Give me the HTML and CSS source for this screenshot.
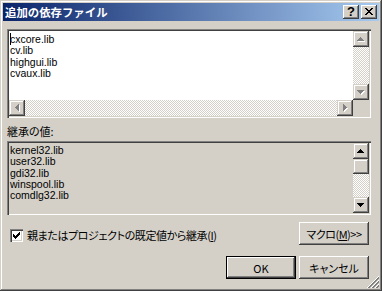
FILE: index.html
```html
<!DOCTYPE html>
<html lang="ja">
<head>
<meta charset="utf-8">
<link rel="stylesheet" href="styles.css">
</head>
<body>
<div class="window">
  <div class="titlebar">
    <span class="title">追加の依存ファイル</span>
    <div class="tbtns">
      <span class="tbtn help">?</span>
      <span class="tbtn close"><svg width="16" height="14" viewBox="0 0 16 14" shape-rendering="crispEdges"><path fill="#000" d="M4 3h2v1h-2zM10 3h2v1h-2zM5 4h2v1h-2zM9 4h2v1h-2zM6 5h4v1h-4zM7 6h2v1h-2zM6 7h4v1h-4zM5 8h2v1h-2zM9 8h2v1h-2zM4 9h2v1h-2zM10 9h2v1h-2z"/></svg></span>
    </div>
  </div>
  <div class="client">
    <div class="edit edit-white">
      <div class="edit-text">
        <div class="line"><span class="caret"></span>cxcore.lib</div>
        <div class="line">cv.lib</div>
        <div class="line">highgui.lib</div>
        <div class="line">cvaux.lib</div>
      </div>
      <div class="vscroll">
        <div class="sbtn"><svg width="16" height="16" viewBox="0 0 16 16" shape-rendering="crispEdges"><path fill="#fff" d="M8 7h1v1h-1zM7 8h3v1h-3zM6 9h5v1h-5zM5 10h7v1h-7z"/><path fill="#808080" d="M7 6h1v1h-1zM6 7h3v1h-3zM5 8h5v1h-5zM4 9h7v1h-7z"/></svg></div>
        <div class="track"></div>
        <div class="sbtn"><svg width="16" height="16" viewBox="0 0 16 16" shape-rendering="crispEdges"><path fill="#fff" d="M5 7h7v1h-7zM6 8h5v1h-5zM7 9h3v1h-3zM8 10h1v1h-1z"/><path fill="#808080" d="M4 6h7v1h-7zM5 7h5v1h-5zM6 8h3v1h-3zM7 9h1v1h-1z"/></svg></div>
      </div>
      <div class="hscroll">
        <div class="sbtn"><svg width="16" height="16" viewBox="0 0 16 16" shape-rendering="crispEdges"><path fill="#fff" d="M7 8h1v1h-1zM8 7h1v3h-1zM9 6h1v5h-1zM10 5h1v7h-1z"/><path fill="#808080" d="M6 7h1v1h-1zM7 6h1v3h-1zM8 5h1v5h-1zM9 4h1v7h-1z"/></svg></div>
        <div class="track"></div>
        <div class="sbtn"><svg width="16" height="16" viewBox="0 0 16 16" shape-rendering="crispEdges"><path fill="#fff" d="M7 5h1v7h-1zM8 6h1v5h-1zM9 7h1v3h-1zM10 8h1v1h-1z"/><path fill="#808080" d="M6 4h1v7h-1zM7 5h1v5h-1zM8 6h1v3h-1zM9 7h1v1h-1z"/></svg></div>
      </div>
      <div class="corner"></div>
    </div>

    <div class="label">継承の値:</div>

    <div class="edit edit-grey">
      <div class="edit-text">
        <div class="line">kernel32.lib</div>
        <div class="line">user32.lib</div>
        <div class="line">gdi32.lib</div>
        <div class="line">winspool.lib</div>
        <div class="line">comdlg32.lib</div>
      </div>
      <div class="vscroll vscroll-full">
        <div class="sbtn"><svg width="16" height="16" viewBox="0 0 16 16" shape-rendering="crispEdges"><path fill="#000" d="M7 6h1v1h-1zM6 7h3v1h-3zM5 8h5v1h-5zM4 9h7v1h-7z"/></svg></div>
        <div class="sbtn thumb"></div>
        <div class="track"></div>
        <div class="sbtn"><svg width="16" height="16" viewBox="0 0 16 16" shape-rendering="crispEdges"><path fill="#000" d="M4 6h7v1h-7zM5 7h5v1h-5zM6 8h3v1h-3zM7 9h1v1h-1z"/></svg></div>
      </div>
    </div>

    <div class="row-inherit">
      <label class="check">
        <span class="checkbox"><svg width="9" height="9" viewBox="0 0 9 9" shape-rendering="crispEdges"><path fill="#000" d="M7 1h1v3h-1zM6 2h1v3h-1zM5 3h1v3h-1zM4 4h1v3h-1zM3 5h1v3h-1zM2 4h1v3h-1zM1 3h1v3h-1z"/></svg></span>
        <span class="check-text">親またはプロジェクトの既定値から継承(<u>I</u>)</span>
      </label>
      <button class="btn btn-macro">マクロ(<u>M</u>)&gt;&gt;</button>
    </div>

    <div class="row-actions">
      <button class="btn btn-default">OK</button>
      <button class="btn">キャンセル</button>
    </div>
  </div>
  <svg class="grip" width="12" height="12" viewBox="0 0 12 12" shape-rendering="crispEdges"><path fill="#fff" d="M11 0h1v1h-1zM10 1h1v1h-1zM9 2h1v1h-1zM8 3h1v1h-1zM7 4h1v1h-1zM11 4h1v1h-1zM6 5h1v1h-1zM10 5h1v1h-1zM5 6h1v1h-1zM9 6h1v1h-1zM4 7h1v1h-1zM8 7h1v1h-1zM3 8h1v1h-1zM7 8h1v1h-1zM11 8h1v1h-1zM2 9h1v1h-1zM6 9h1v1h-1zM10 9h1v1h-1zM1 10h1v1h-1zM5 10h1v1h-1zM9 10h1v1h-1zM0 11h1v1h-1zM4 11h1v1h-1zM8 11h1v1h-1z"/><path fill="#808080" d="M11 1h1v1h-1zM10 2h2v1h-2zM9 3h2v1h-2zM8 4h2v1h-2zM7 5h2v1h-2zM11 5h1v1h-1zM6 6h2v1h-2zM10 6h2v1h-2zM5 7h2v1h-2zM9 7h2v1h-2zM4 8h2v1h-2zM8 8h2v1h-2zM3 9h2v1h-2zM7 9h2v1h-2zM11 9h1v1h-1zM2 10h2v1h-2zM6 10h2v1h-2zM10 10h2v1h-2zM1 11h2v1h-2zM5 11h2v1h-2zM9 11h2v1h-2z"/></svg>
</div>
</body>
</html>
```
FILE: styles.css
```css
* { box-sizing: border-box; }
html, body { margin: 0; padding: 0; background: #d4d0c8; }
body { width: 382px; height: 291px; overflow: hidden; font-family: "Liberation Sans", "Noto Sans CJK JP", sans-serif; }

.window {
  position: relative;
  width: 382px;
  height: 291px;
  background: #d4d0c8;
  padding: 3px;
  box-shadow: inset -1px -1px #404040, inset 1px 1px #d4d0c8, inset -2px -2px #808080, inset 2px 2px #fff;
}

.titlebar {
  height: 18px;
  background: linear-gradient(to right, #0a246a, #a6caf0);
  display: flex;
  align-items: center;
  justify-content: space-between;
}
.title {
  color: #fff;
  font-family: "Noto Sans CJK JP", sans-serif;
  font-weight: bold;
  font-size: 11.4px;
  line-height: 14px;
  padding-left: 2px;
}
.tbtns { display: flex; gap: 2px; margin-right: 2px; }
.tbtn {
  width: 16px;
  height: 14px;
  background: #d4d0c8;
  box-shadow: inset -1px -1px #404040, inset 1px 1px #fff, inset -2px -2px #808080;
  display: flex;
  align-items: center;
  justify-content: center;
}
.help {
  font-family: "Liberation Sans", sans-serif;
  font-weight: bold;
  font-size: 13px;
  line-height: 14px;
  color: #000;
}

.client { padding: 8px 8px 0 4px; }

.edit {
  display: grid;
  padding: 2px;
  box-shadow: inset 1px 1px #808080, inset 2px 2px #404040, inset -1px -1px #fff, inset -2px -2px #d4d0c8;
  width: 364px;
}
.edit-white {
  height: 89px;
  background: #fff;
  grid-template-columns: 1fr 16px;
  grid-template-rows: 1fr 16px;
}
.edit-grey {
  height: 74px;
  background: #d4d0c8;
  grid-template-columns: 1fr 16px;
}
.edit-text {
  font-family: "Liberation Sans", sans-serif;
  font-size: 10.5px;
  line-height: 11.35px;
  color: #000;
  padding: 2px 0 0 1px;
}
.line { white-space: nowrap; }
.caret {
  display: inline-block;
  width: 1px;
  height: 12px;
  background: #000;
  vertical-align: -2px;
  margin-right: -1px;
}

.vscroll { display: flex; flex-direction: column; }
.hscroll { display: flex; }
.track {
  flex: 1;
  background: repeating-conic-gradient(#d4d0c8 0 25%, #fff 0 50%) 0 0 / 2px 2px;
}
.sbtn {
  width: 16px;
  height: 16px;
  flex: none;
  background: #d4d0c8;
  box-shadow: inset -1px -1px #404040, inset 1px 1px #d4d0c8, inset -2px -2px #808080, inset 2px 2px #fff;
}
.sbtn svg { display: block; }
.thumb { height: 15px; }
.corner { background: #d4d0c8; }

.label {
  height: 23px;
  padding-top: 6px;
  padding-left: 0;
  font-family: "Noto Sans CJK JP", sans-serif;
  font-size: 11px;
  line-height: 14px;
  color: #000;
  font-feature-settings: "palt" 1;
}

.row-inherit {
  display: flex;
  justify-content: space-between;
  align-items: flex-start;
  margin-top: 7px;
  padding-right: 2px;
}
.check {
  display: flex;
  align-items: center;
  gap: 4px;
  margin-top: 6px;
  margin-left: 3px;
}
.checkbox {
  width: 13px;
  height: 13px;
  background: #fff;
  box-shadow: inset 1px 1px #808080, inset 2px 2px #404040, inset -1px -1px #fff, inset -2px -2px #d4d0c8;
  display: flex;
  align-items: center;
  justify-content: center;
}
.checkbox svg { display: block; }
.check-text, .btn {
  font-family: "Noto Sans CJK JP", sans-serif;
  font-size: 11px;
  line-height: 14px;
  color: #000;
  font-feature-settings: "palt" 1;
}
.check-text { letter-spacing: -0.4px; }
.btn {
  width: 70px;
  height: 23px;
  padding: 0;
  border: none;
  background: #d4d0c8;
  box-shadow: inset -1px -1px #404040, inset 1px 1px #fff, inset -2px -2px #808080;
}
.btn-macro { letter-spacing: -0.5px; }
.btn-default {
  border: 1px solid #000;
  box-shadow: inset -1px -1px #404040, inset 1px 1px #fff, inset -2px -2px #808080;
}

.row-actions {
  display: flex;
  justify-content: flex-end;
  gap: 3px;
  margin-top: 11px;
  padding-right: 2px;
}

.grip { position: absolute; right: 3px; bottom: 3px; }
```
